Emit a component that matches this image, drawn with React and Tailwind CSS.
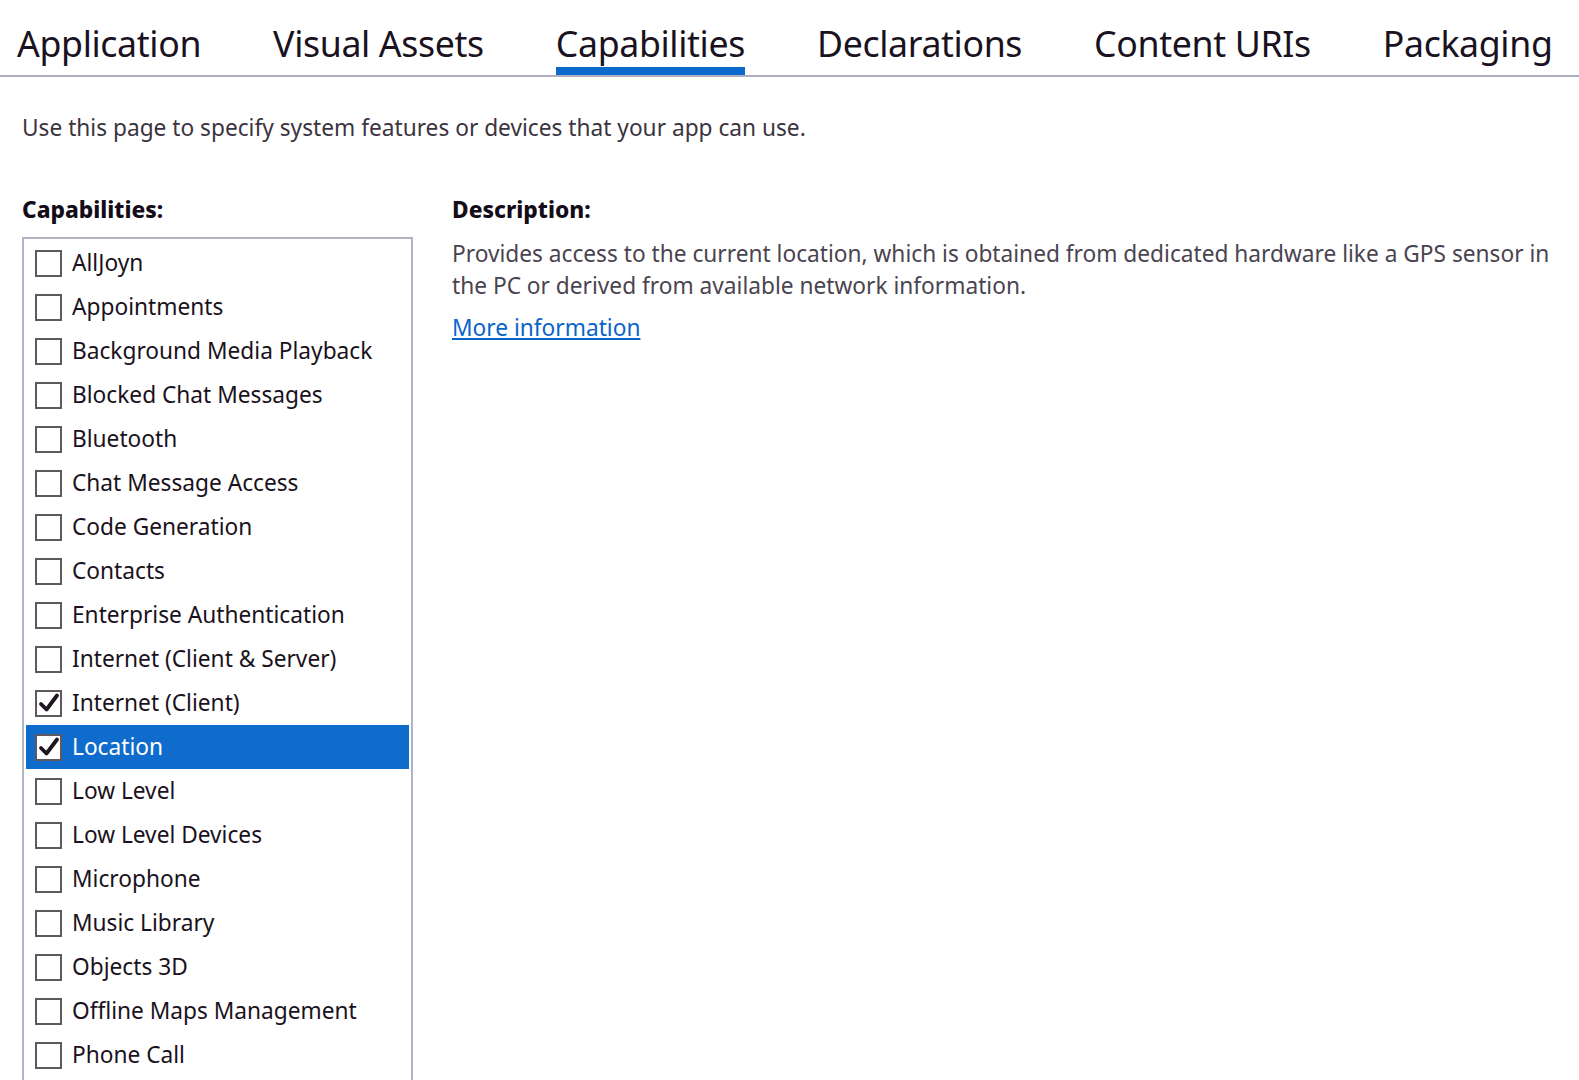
const tabs = ["Application", "Visual Assets", "Capabilities", "Declarations", "Content URIs", "Packaging"];

const capabilities = [
  { name: "AllJoyn" },
  { name: "Appointments" },
  { name: "Background Media Playback" },
  { name: "Blocked Chat Messages" },
  { name: "Bluetooth" },
  { name: "Chat Message Access" },
  { name: "Code Generation" },
  { name: "Contacts" },
  { name: "Enterprise Authentication" },
  { name: "Internet (Client & Server)" },
  { name: "Internet (Client)", checked: true },
  { name: "Location", checked: true, selected: true },
  { name: "Low Level" },
  { name: "Low Level Devices" },
  { name: "Microphone" },
  { name: "Music Library" },
  { name: "Objects 3D" },
  { name: "Offline Maps Management" },
  { name: "Phone Call" },
];

const CheckMark = () => (
  <svg width="22" height="22" viewBox="0 0 22 22">
    <path d="M3 12 L8.5 17.5 L19 3.5" fill="none" stroke="#1e1620" strokeWidth="3.8" strokeLinecap="round" strokeLinejoin="round" />
  </svg>
);

const CapabilityRow = ({ item }) => (
  <div
    className={`flex h-[44px] items-center gap-[10px] pl-[9px] ${
      item.selected ? "bg-[#0f6bcc] text-white" : "text-[#1a1220]"
    }`}
  >
    <div className="flex size-[27px] shrink-0 items-center justify-center border-2 border-[#5f585f] bg-white">
      {item.checked ? <CheckMark /> : null}
    </div>
    <span className="whitespace-nowrap text-[22.7px] leading-none">{item.name}</span>
  </div>
);

export default function App() {
  return (
    <div className="h-[1080px] w-[1579px] overflow-hidden bg-white font-['Noto_Sans','Open_Sans',sans-serif] text-[#1a1220]">
      <div className="flex h-[77px] items-end gap-[72px] border-b-2 border-[#aeb0c0] pl-[17px]">
        {tabs.map((tab) => (
          <div key={tab} className="flex flex-col">
            <span className="pb-[2px] text-[35.7px] leading-[44px] tracking-[-0.01em]">{tab}</span>
            <div className={`h-[8px] ${tab === "Capabilities" ? "bg-[#0c6acd]" : ""}`} />
          </div>
        ))}
      </div>

      <p className="mt-[36px] pl-[22px] text-[22.7px] leading-[30px] text-[#3b3440]">
        Use this page to specify system features or devices that your app can use.
      </p>

      <div className="mt-[52px] flex gap-[39px] pl-[22px]">
        <div className="w-[391px] shrink-0">
          <h2 className="text-[22.7px] font-extrabold leading-[30px] text-[#140c18]">Capabilities:</h2>
          <div className="mt-[12px] h-[900px] border-2 border-[#b0b3c6] p-[2px]">
            {capabilities.map((item) => (
              <CapabilityRow key={item.name} item={item} />
            ))}
          </div>
        </div>

        <div className="flex-1 pr-[20px]">
          <h2 className="text-[22.7px] font-extrabold leading-[30px] text-[#140c18]">Description:</h2>
          <p className="mt-[13px] text-[22.7px] leading-[32px] text-[#4a4450]">
            Provides access to the current location, which is obtained from dedicated hardware like a GPS sensor in the PC or derived from available network information.
          </p>
          <a href="#" className="mt-[10px] inline-block text-[22.7px] leading-[32px] text-[#0a64c8] underline">
            More information
          </a>
        </div>
      </div>
    </div>
  );
}
